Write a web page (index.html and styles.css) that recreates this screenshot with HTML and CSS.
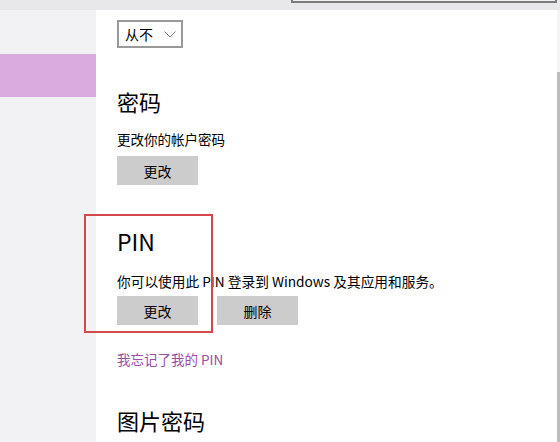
FILE: index.html
```html
<!DOCTYPE html>
<html lang="zh-CN">
<head>
<meta charset="utf-8">
<link rel="stylesheet" href="styles.css">
</head>
<body>
<div class="topbar">
  <div class="search"></div>
</div>
<div class="main">
  <nav class="sidebar">
    <div class="nav-selected"></div>
  </nav>
  <section class="content">
    <div class="dropdown"><span>从不</span>
      <svg class="chev" width="12" height="7" viewBox="0 0 12 7"><path d="M0.5 0.5 L6 6 L11.5 0.5" fill="none" stroke="#7a7a7a" stroke-width="1"/></svg>
    </div>

    <h2 class="heading h-pwd">密码</h2>
    <p class="desc">更改你的帐户密码</p>
    <div class="btns"><button class="btn">更改</button></div>

    <div class="pin-block">
      <h2 class="heading h-pin">PIN</h2>
      <p class="desc desc-pin">你可以使用此 PIN 登录到 Windows 及其应用和服务。</p>
      <div class="btns"><button class="btn">更改</button><button class="btn">删除</button></div>
      <div class="highlight"></div>
    </div>

    <a class="link">我忘记了我的 PIN</a>

    <h2 class="heading h-pic">图片密码</h2>
  </section>
  <div class="scrollbar"><div class="thumb"></div></div>
</div>
</body>
</html>
```

FILE: styles.css
```css
html, body {
  margin: 0;
  padding: 0;
  background: #ffffff;
  width: 560px;
  height: 442px;
  overflow: hidden;
  font-family: "Noto Sans CJK SC", "Noto Sans", sans-serif;
  color: #000;
}

.topbar {
  height: 10px;
  background: #e8e7e9;
  display: flex;
  justify-content: flex-end;
}

.search {
  width: 262px;
  height: 1px;
  margin-right: 3px;
  border: 2px solid #7b7b7b;
  border-top: none;
  background: #f1f1f1;
}

.main {
  display: flex;
  height: 432px;
}

.sidebar {
  width: 96px;
  flex: none;
  background: #f2f1f3;
  padding-top: 44px;
  box-sizing: border-box;
}

.nav-selected {
  height: 43px;
  background: #d9abdf;
}

.content {
  flex: 1;
  padding-left: 21px;
  padding-top: 10px;
  position: relative;
}

.dropdown {
  width: 56px;
  height: 24px;
  border: 2px solid #999999;
  display: flex;
  align-items: center;
  padding-left: 6px;
  box-sizing: content-box;
  font-size: 14px;
  gap: 11px;
}

.dropdown span {
  line-height: 24px;
}

.chev {
  margin-top: 1px;
}

.heading {
  margin: 0;
  font-size: 22px;
  font-weight: 400;
  line-height: 30px;
}

.h-pwd { margin-top: 38px; }
.h-pin { font-size: 23px; }
.h-pic { margin-top: 36px; }

.desc {
  margin: 13px 0 0;
  font-size: 13.5px;
  line-height: 20px;
}

.desc-pin { margin-top: 15px; font-size: 13.7px; }

.btns {
  display: flex;
  gap: 19px;
  margin-top: 7px;
}

.desc-pin + .btns { margin-top: 5px; }

.btn {
  width: 81px;
  height: 29px;
  border: none;
  background: #cccccc;
  font-family: inherit;
  font-size: 14px;
  color: #000;
  padding: 0;
}

.pin-block {
  position: relative;
  margin-top: 41px;
}

.highlight {
  position: absolute;
  left: -33px;
  top: -12px;
  width: 125px;
  height: 115px;
  border: 2px solid #d4474b;
}

.link {
  display: block;
  margin-top: 24px;
  font-size: 13.5px;
  line-height: 20px;
  color: #a04aa8;
}

.scrollbar {
  width: 3px;
  flex: none;
  background: #f4f3f5;
  padding-top: 62px;
  box-sizing: border-box;
}

.thumb {
  height: 100%;
  background: #bdbdbd;
}
```
